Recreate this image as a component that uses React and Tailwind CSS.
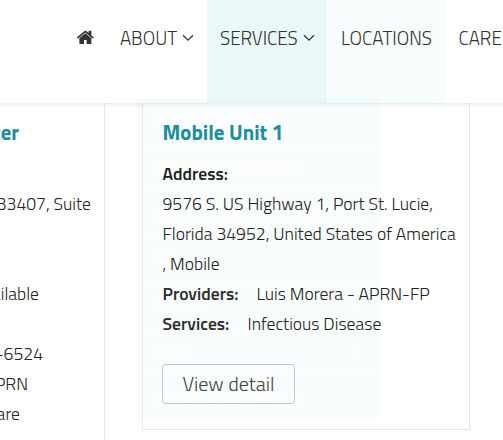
import React from "react";

const menu = [
  ["Board of Directors", false],
  ["Senior Leadership Team", false],
  ["Mission, History, Vision & Values", false],
  ["FAQ", false],
  ["Policies", true],
  ["Forms", true],
  ["Share Review About Us", false],
];

function Chevron({ className }) {
  return (
    <svg className={className} viewBox="0 0 12 8" fill="none" stroke="currentColor" strokeWidth="1.3">
      <path d="M1 1.2 6 6.2l5-5" />
    </svg>
  );
}

function Home() {
  return (
    <svg className="mt-[28px] ml-[75.6px] h-[18.7px] w-[18.7px] shrink-0" viewBox="0 0 1792 1792" fill="#333">
      <path d="M1472 992v480q0 26-19 45t-45 19h-384v-384h-256v384h-384q-26 0-45-19t-19-45v-480q0-1 .5-3t.5-3l575-474 575 474q1 2 1 6zm223-69l-62 74q-8 9-21 11h-3q-13 0-21-7l-692-577-692 577q-12 8-24 7-13-2-21-11l-62-74q-8-10-7-23.5t11-21.5l719-599q32-26 76-26t76 26l244 204v-195q0-14 9-23t23-9h192q14 0 23 9t9 23v408l219 182q10 8 11 21.5t-7 23.5z" />
    </svg>
  );
}

function Header() {
  return (
    <header className="relative z-10 flex h-[103px] w-full overflow-hidden bg-white text-[18.8px] leading-[24px] font-light whitespace-nowrap text-[#333] shadow-[0_1px_5px_rgba(0,0,0,0.12)]">
      <Home />
      <div className="ml-[25.7px] flex w-[87px] shrink-0 pt-[26px]">
        <span className="w-[57px]">ABOUT</span>
        <Chevron className="mt-[8px] ml-[5px] h-[8px] w-[12px] shrink-0" />
      </div>
      <div className="flex w-[120px] shrink-0 bg-[#ebf8f8] pt-[26px] pl-[13px]">
        <span className="w-[78px]">SERVICES</span>
        <Chevron className="mt-[8px] ml-[5px] h-[8px] w-[12px] shrink-0" />
      </div>
      <div className="ml-px w-[117px] shrink-0 bg-[#f7fdfd] pt-[26px] pl-[13px]">LOCATIONS</div>
      <div className="shrink-0 pt-[26px] pl-[13.5px]">CAREERS</div>
    </header>
  );
}

export default function App() {
  return (
    <div className="relative h-[440px] w-[503px] overflow-hidden bg-white font-['Titillium_Web',Roboto,sans-serif]">
      <Header />
      <main className="flex text-[17.6px] leading-[30px] font-light whitespace-nowrap text-[#222]">
        <section className="h-[337px] w-[105px] shrink-0 overflow-hidden border-r border-[#e8e8e8]">
          <h2 className="mt-[14px] flex w-[19px] justify-end text-[20.8px] font-bold text-[#208d9a]">Center</h2>
          <p className="mt-[42px] flex w-[91px] justify-end">33407, Suite</p>
          <p className="mt-[60px] flex w-[39px] justify-end">Available</p>
          <p className="mt-[30px] flex w-[43px] justify-end">844-6524</p>
          <p className="flex w-[28px] justify-end">APRN</p>
          <p className="flex w-[20px] justify-end">Care</p>
        </section>
        <section className="relative z-[1] ml-[37px] h-[327px] w-[328px] shrink-0 border border-t-0 border-[#e8e8e8] pt-[14px] pl-[19.5px]">
          <h2 className="text-[20.8px] font-bold tracking-[0.05px] text-[#208d9a]">Mobile Unit 1</h2>
          <p className="mt-[12px] font-semibold">Address:</p>
          <p>9576 S. US Highway 1, Port St. Lucie,</p>
          <p>Florida 34952, United States of America</p>
          <p>, Mobile</p>
          <p className="flex"><span className="w-[94px] font-semibold text-[#2c2c2c]">Providers:</span>Luis Morera - APRN-FP</p>
          <p className="flex"><span className="w-[85px] font-semibold text-[#2c2c2c]">Services:</span>Infectious Disease</p>
          <button className="mt-[25px] ml-[-0.5px] flex h-[40px] w-[133px] items-center justify-center rounded-[3px] border border-[#c4c8ca] text-[20.2px] font-light text-[#444]">View detail</button>
        </section>
      </main>
      <div className="absolute top-[99px] left-[136px] z-0 h-[322px] w-[242px] bg-[#f9fdfe] text-[15px] font-semibold text-white">
        {menu.map(([label, arrow]) => (
          <div key={label} className="flex h-[46px] items-center justify-between border-b border-[#fbfefe] pt-px pr-[15px] pl-[16px] whitespace-nowrap">
            {label}
            {arrow && <Chevron className="h-[6px] w-[9px] -rotate-90" />}
          </div>
        ))}
      </div>
      <div className="absolute top-[99px] left-[136px] z-20 h-[5px] w-[242px] bg-[#d8f4f2]/30" />
    </div>
  );
}
